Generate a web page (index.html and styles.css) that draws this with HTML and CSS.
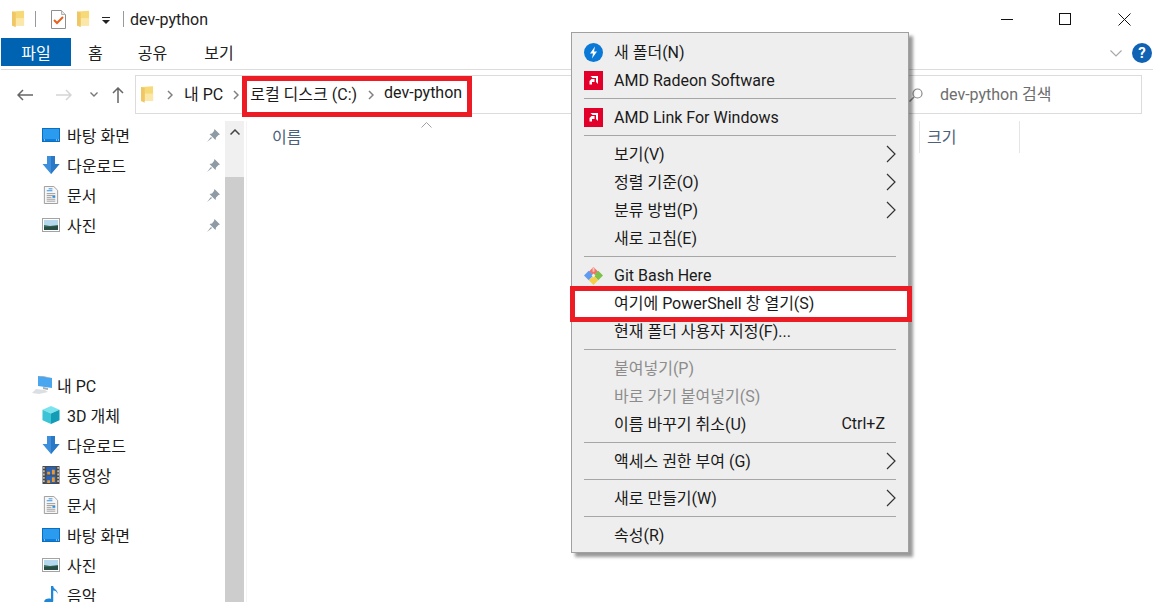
FILE: index.html
```html
<!DOCTYPE html>
<html lang="ko">
<head>
  <meta charset="UTF-8">
  <meta name="viewport" content="width=device-width, initial-scale=1.0">
  <title>dev-python</title>
  <link rel="stylesheet" href="styles.css">
</head>
<body>

  <svg class="sprite" xmlns="http://www.w3.org/2000/svg">
    <symbol id="i-folder" viewBox="0 0 14 18">
      <path d="M0 1l13-1v16H0z" fill="#f8d978"/>
      <path d="M4 8h9v8H4z" fill="#fbe7a8"/>
      <path d="M0 1l4 1v16l-4-2z" fill="#efc765"/>
    </symbol>
    <symbol id="i-check" viewBox="0 0 15 19">
      <path d="M.5.5h10l4 4v14H.5z" fill="#fff" stroke="#8f8f8f"/>
      <path d="M10.5.5v4h4" fill="#e6e6e6" stroke="#b0b0b0"/>
      <path d="M3 10l3 3 6-6" fill="none" stroke="#e8601c" stroke-width="2"/>
    </symbol>
    <symbol id="i-desktop" viewBox="0 0 18 14">
      <rect width="18" height="14" fill="#0b6fc0"/>
      <rect x="1" y="1" width="16" height="10" fill="#2b9bf0"/>
      <rect x="1" y="11" width="16" height="2" fill="#0f7ed8"/>
      <path d="M2 12h1M14 12h1M16 12h1" stroke="#e8f4ff"/>
    </symbol>
    <symbol id="i-down" viewBox="0 0 17 18">
      <path d="M4.500 0h8v8H17l-8.500 10L0 8h4.500z" fill="#3d8fdc"/>
      <path d="M8.500 0h4v8H17l-8.500 10z" fill="#2a78c6"/>
    </symbol>
    <symbol id="i-doc" viewBox="0 0 15 19">
      <path d="M.5.5h10l4 4v14H.5z" fill="#f6f6f6" stroke="#9a9a9a"/>
      <path d="M5 3h4M3 5h6" stroke="#2f8fe0"/>
      <path d="M3 8h9M3 10h9M3 12h5M3 14h9M3 16h9" stroke="#9c9c9c"/>
      <path d="M9 11.500h3" stroke="#2f8fe0" stroke-width="2"/>
    </symbol>
    <symbol id="i-picture" viewBox="0 0 18 14">
      <rect x=".5" y=".5" width="17" height="13" fill="#fff" stroke="#a3a3a3"/>
      <rect x="2" y="2" width="14" height="10" fill="#b5d8ee"/>
      <path d="M2 7l6 1 8-1v5H2z" fill="#3d6f5c"/>
      <path d="M2 9l14-1v4H2z" fill="#274d45"/>
    </symbol>
    <symbol id="i-pin" viewBox="0 0 13 13">
      <path d="M7.500 0L13 5.500l-1.500.5L9 8.500 8.500 11 2.500 5l2.500-.5L7 2z" fill="#8e9aa4"/>
      <path d="M4 8L0 13l5-4z" fill="#8e9aa4"/>
    </symbol>
    <symbol id="i-pc" viewBox="0 0 20 19">
      <path d="M6 0l14 2v10L6 10z" fill="#4aa6ee"/>
      <path d="M6 0l2-.5 12 2.500-14-2z" fill="#8a8f96"/>
      <path d="M11 11l5 1v2l-5-1z" fill="#a8adb2"/>
      <path d="M4 13l9 1 3 2-9 2-7-1z" fill="#dcdfe2"/>
    </symbol>
    <symbol id="i-cube" viewBox="0 0 18 19">
      <path d="M9 0l9 4-9 4-9-4z" fill="#7be3ee"/>
      <path d="M0 4l9 4v11l-9-4z" fill="#3cc4d6"/>
      <path d="M18 4L9 8v11l9-4z" fill="#139cb6"/>
    </symbol>
    <symbol id="i-film" viewBox="0 0 18 19">
      <rect width="18" height="19" fill="#4a4a4a"/>
      <path d="M1.500 1v17M16.500 1v17" stroke="#d8d8d8" stroke-width="1.500" stroke-dasharray="2 1.500"/>
      <rect x="4" y="1" width="10" height="8" fill="#2a62b8"/>
      <rect x="4" y="10" width="10" height="8" fill="#2a62b8"/>
      <path d="M5 6h3v3H5zM10 4h3v5h-3zM5 15h3v3H5zM10 12h3v5h-3z" fill="#e89a2a"/>
    </symbol>
    <symbol id="i-note" viewBox="0 0 12 16">
      <path d="M6 0h2c0 3 4 3 4 7-1-2-2-3-4-3v9c0 2-2 3-4 3s-4-1-4-2.500S2 11 4 11c1 0 1.500 0 2 .5z" fill="#1f86d8"/>
    </symbol>
    <symbol id="i-amd" viewBox="0 0 19 19">
      <rect width="19" height="19" fill="#e2002a"/>
      <path d="M6.500 5H14v8l-2-2V7H8.500z" fill="#fff"/>
      <path d="M5.500 13.500V10l2-2h3v3H8v2.500z" fill="#fff"/>
    </symbol>
    <symbol id="i-bolt" viewBox="0 0 19 19">
      <circle cx="9.500" cy="9.500" r="9.500" fill="#0a78d7"/>
      <path d="M11 3.500L6 10.500h3L8 15.500l5-7h-3z" fill="#fff"/>
    </symbol>
    <symbol id="i-git" viewBox="0 0 20 20">
      <path d="M10 1l5 5-5 4-5-4z" fill="#f0736a"/>
      <path d="M11 1.500h-2V6h2z" fill="#f9c5c0"/>
      <path d="M5 5l5 5-5 5-5-5z" fill="#5d9cf0"/>
      <path d="M15 5l5 5-5 5-5-5z" fill="#7ec04a"/>
      <path d="M10 10l5 5-5 5-5-5z" fill="#f6cf4a"/>
      <path d="M10 8l2 2-2 2-2-2z" fill="#eee"/>
    </symbol>
    <symbol id="i-chevron" viewBox="0 0 10 18">
      <path d="M1 1l8 8-8 8" fill="none" stroke="#333" stroke-width="1.200"/>
    </symbol>
    <symbol id="i-crumb" viewBox="0 0 6 10">
      <path d="M1 1l4 4-4 4" fill="none" stroke="#808080" stroke-width="1.500"/>
    </symbol>
  </svg>

  <div class="titlebar">
    <svg class="ic-folder"><use href="#i-folder"/></svg>
    <span class="tb-sep sep-a"></span>
    <svg class="ic-check"><use href="#i-check"/></svg>
    <svg class="ic-folder folder-b"><use href="#i-folder"/></svg>
    <svg class="qa-arrow" viewBox="0 0 8 7"><path d="M0 0h8v1H0zM0 3h8L4 7z" fill="#222"/></svg>
    <span class="tb-sep sep-b"></span>
    <span class="title">dev-python</span>
    <div class="win-btns">
      <svg class="win-btn" viewBox="0 0 13 13"><path d="M1 6.500h12" stroke="#111"/></svg>
      <svg class="win-btn" viewBox="0 0 13 13"><rect x=".5" y=".5" width="11" height="11" fill="none" stroke="#111"/></svg>
      <svg class="win-btn" viewBox="0 0 13 13"><path d="M.5.500l12 12M12.500.5l-12 12" stroke="#111"/></svg>
    </div>
  </div>

  <div class="ribbon">
    <span class="tab tab-file">파일</span>
    <span class="tab tab-home">홈</span>
    <span class="tab tab-share">공유</span>
    <span class="tab tab-view">보기</span>
    <svg class="ribbon-chevron" viewBox="0 0 12 7"><path d="M.5.500L6 6 11.500.5" fill="none" stroke="#a8a8a8" stroke-width="1.200"/></svg>
    <span class="help">?</span>
  </div>

  <div class="navrow">
    <svg class="nav nav-back" viewBox="0 0 16 12"><path d="M16 6H1M6 1L1 6l5 5" fill="none" stroke="#666" stroke-width="1.500"/></svg>
    <svg class="nav nav-fwd" viewBox="0 0 16 12"><path d="M0 6h15M10 1l5 5-5 5" fill="none" stroke="#d5d5d5" stroke-width="1.500"/></svg>
    <svg class="nav nav-drop" viewBox="0 0 8 5"><path d="M.5.500L4 4 7.500.5" fill="none" stroke="#777" stroke-width="1.400"/></svg>
    <svg class="nav nav-up" viewBox="0 0 12 16"><path d="M6 16V1M1 6l5-5 5 5" fill="none" stroke="#666" stroke-width="1.500"/></svg>
    <div class="address">
      <svg class="ic-folder"><use href="#i-folder"/></svg>
      <svg class="crumb-arrow arrow-first"><use href="#i-crumb"/></svg>
      <span class="crumb">내 PC</span>
      <svg class="crumb-arrow arrow-second"><use href="#i-crumb"/></svg>
      <div class="crumb-mark">
        <span class="crumb">로컬 디스크 (C:)</span>
        <svg class="crumb-arrow arrow-third"><use href="#i-crumb"/></svg>
        <span class="crumb">dev-python</span>
      </div>
    </div>
    <div class="search">
      <svg class="search-ic" viewBox="0 0 14 14"><circle cx="8.500" cy="5.500" r="4.500" fill="none" stroke="#8a8a8a" stroke-width="1.200"/><path d="M5 9l-4.500 4.500" stroke="#8a8a8a" stroke-width="1.500"/></svg>
      <span>dev-python 검색</span>
    </div>
  </div>

  <div class="main">
    <div class="sidebar">
      <div class="nav-item"><svg class="ic-wide"><use href="#i-desktop"/></svg><span>바탕 화면</span><svg class="ic-pin"><use href="#i-pin"/></svg></div>
      <div class="nav-item"><svg class="ic-wide ic-tall"><use href="#i-down"/></svg><span>다운로드</span><svg class="ic-pin"><use href="#i-pin"/></svg></div>
      <div class="nav-item"><svg class="ic-wide ic-tall"><use href="#i-doc"/></svg><span>문서</span><svg class="ic-pin"><use href="#i-pin"/></svg></div>
      <div class="nav-item"><svg class="ic-wide"><use href="#i-picture"/></svg><span>사진</span><svg class="ic-pin"><use href="#i-pin"/></svg></div>

      <div class="nav-item nav-pc"><svg class="ic-pc"><use href="#i-pc"/></svg><span>내 PC</span></div>
      <div class="nav-item"><svg class="ic-wide ic-tall"><use href="#i-cube"/></svg><span>3D 개체</span></div>
      <div class="nav-item"><svg class="ic-wide ic-tall"><use href="#i-down"/></svg><span>다운로드</span></div>
      <div class="nav-item"><svg class="ic-wide ic-tall"><use href="#i-film"/></svg><span>동영상</span></div>
      <div class="nav-item"><svg class="ic-wide ic-tall"><use href="#i-doc"/></svg><span>문서</span></div>
      <div class="nav-item"><svg class="ic-wide"><use href="#i-desktop"/></svg><span>바탕 화면</span></div>
      <div class="nav-item"><svg class="ic-wide"><use href="#i-picture"/></svg><span>사진</span></div>
      <div class="nav-item"><svg class="ic-wide ic-tall"><use href="#i-note"/></svg><span>음악</span></div>
    </div>

    <div class="scrollbar">
      <div class="scroll-track">
        <svg class="scroll-up" viewBox="0 0 10 6"><path d="M.5 5.500L5 1l4.500 4.500" fill="none" stroke="#444" stroke-width="1.500"/></svg>
      </div>
      <div class="scroll-thumb"></div>
    </div>

    <div class="files">
      <div class="col col-name">
        <span>이름</span>
        <svg class="sort-caret" viewBox="0 0 11 6"><path d="M.5 5.500L5.500.5l5 5" fill="none" stroke="#a0a0a0"/></svg>
      </div>
      <div class="col col-size"><span>크기</span></div>
    </div>
  </div>

  <div class="menu">
    <div class="row"><svg class="row-ic"><use href="#i-bolt"/></svg><span>새 폴더(N)</span></div>
    <div class="row row-latin"><svg class="row-ic"><use href="#i-amd"/></svg><span>AMD Radeon Software</span></div>
    <div class="menu-sep"></div>
    <div class="row row-latin"><svg class="row-ic"><use href="#i-amd"/></svg><span>AMD Link For Windows</span></div>
    <div class="menu-sep"></div>
    <div class="row"><span class="row-ic"></span><span>보기(V)</span><svg class="row-more"><use href="#i-chevron"/></svg></div>
    <div class="row"><span class="row-ic"></span><span>정렬 기준(O)</span><svg class="row-more"><use href="#i-chevron"/></svg></div>
    <div class="row"><span class="row-ic"></span><span>분류 방법(P)</span><svg class="row-more"><use href="#i-chevron"/></svg></div>
    <div class="row"><span class="row-ic"></span><span>새로 고침(E)</span></div>
    <div class="menu-sep"></div>
    <div class="row row-latin"><svg class="row-ic"><use href="#i-git"/></svg><span>Git Bash Here</span></div>
    <div class="row row-mark"><span class="row-ic"></span><span>여기에 PowerShell 창 열기(S)</span></div>
    <div class="row"><span class="row-ic"></span><span>현재 폴더 사용자 지정(F)...</span></div>
    <div class="menu-sep"></div>
    <div class="row row-off"><span class="row-ic"></span><span>붙여넣기(P)</span></div>
    <div class="row row-off"><span class="row-ic"></span><span>바로 가기 붙여넣기(S)</span></div>
    <div class="row"><span class="row-ic"></span><span>이름 바꾸기 취소(U)</span><span class="row-key">Ctrl+Z</span></div>
    <div class="menu-sep"></div>
    <div class="row"><span class="row-ic"></span><span>액세스 권한 부여 (G)</span><svg class="row-more"><use href="#i-chevron"/></svg></div>
    <div class="menu-sep"></div>
    <div class="row"><span class="row-ic"></span><span>새로 만들기(W)</span><svg class="row-more"><use href="#i-chevron"/></svg></div>
    <div class="menu-sep"></div>
    <div class="row"><span class="row-ic"></span><span>속성(R)</span></div>
  </div>

</body>
</html>
```

FILE: styles.css
```css
html, body {
  height: 100%;
}

body {
  margin: 0;
  height: 602px;
  overflow: hidden;
  position: relative;
  background: #fff;
  color: #1a1a1a;
  font-family: Roboto, "Noto Sans CJK KR", sans-serif;
  font-size: 16px;
}

svg {
  display: block;
  flex: none;
}

.sprite {
  width: 0;
  height: 0;
  position: absolute;
}

/* title bar */
.titlebar {
  height: 38px;
  display: flex;
  align-items: center;
  padding-left: 12px;
}

.ic-folder {
  width: 13px;
  height: 18px;
}

.ic-check {
  width: 15px;
  height: 19px;
  margin-left: 15px;
}

.folder-b {
  margin-left: 11px;
}

.tb-sep {
  width: 1px;
  height: 16px;
  background: #9a9a9a;
}

.sep-a {
  margin-left: 10px;
}

.sep-b {
  margin-left: 13px;
}

.qa-arrow {
  width: 8px;
  height: 7px;
  margin-left: 12px;
  margin-top: 3px;
}

.title {
  margin-left: 6px;
  color: #222;
}

.win-btns {
  margin-left: auto;
  display: flex;
  gap: 46px;
  padding-right: 22px;
}

.win-btn {
  width: 13px;
  height: 13px;
}

/* ribbon tabs */
.ribbon {
  height: 31px;
  margin-left: 1px;
  display: flex;
  align-items: flex-start;
  border-bottom: 1px solid #dcdcdc;
}

.tab {
  height: 28px;
  line-height: 31px;
  color: #222;
}

.tab-file {
  width: 70px;
  text-align: center;
  background: #0063b1;
  color: #fff;
}

.tab-home {
  margin-left: 17px;
}

.tab-share {
  margin-left: 35px;
}

.tab-view {
  margin-left: 37px;
}

.ribbon-chevron {
  width: 12px;
  height: 7px;
  margin-left: auto;
  margin-top: 12px;
}

.help {
  width: 20px;
  height: 20px;
  margin: 5px 1px 0 10px;
  border-radius: 50%;
  background: #0f62b4;
  color: #fff;
  font-weight: 700;
  font-size: 15px;
  line-height: 20px;
  text-align: center;
}

/* address row */
.navrow {
  height: 39px;
  margin-top: 5px;
  padding-right: 11px;
  display: flex;
  align-items: center;
}

.nav-back {
  width: 16px;
  height: 12px;
  margin-left: 17px;
}

.nav-fwd {
  width: 16px;
  height: 12px;
  margin-left: 23px;
}

.nav-drop {
  width: 8px;
  height: 5px;
  margin-left: 18px;
}

.nav-up {
  width: 12px;
  height: 16px;
  margin-left: 14px;
}

.address {
  flex: 1;
  margin-left: 11px;
  height: 37px;
  box-sizing: content-box;
  border: 1px solid #dcdcdc;
  display: flex;
  align-items: center;
  padding-left: 5px;
}

.address .ic-folder {
  height: 17px;
}

.crumb {
  color: #1a1a1a;
  white-space: nowrap;
  position: relative;
  top: -2px;
}

.crumb-arrow {
  width: 6px;
  height: 10px;
}

.arrow-first {
  margin: 0 11px 0 13px;
}

.arrow-second {
  margin: 0 11px 0 10px;
}

.arrow-third {
  margin: 0 10px 0 11px;
}

.crumb-mark {
  position: relative;
  display: flex;
  align-items: center;
}

.crumb-mark::after {
  content: "";
  position: absolute;
  left: -8px;
  right: -10px;
  top: -7px;
  bottom: -10px;
  border: 5px solid #ed1c24;
}

.search {
  width: 235px;
  height: 37px;
  border: 1px solid #dcdcdc;
  border-left: 0;
  display: flex;
  align-items: center;
  color: #6d6d6d;
}

.search span {
  position: relative;
  top: -2px;
}

.search-ic {
  width: 14px;
  height: 14px;
  margin: 0 17px 0 3px;
}

/* left tree and list */
.main {
  height: 488px;
  display: flex;
}

.sidebar {
  width: 225px;
  padding-top: 6px;
}

.nav-item {
  height: 30px;
  display: flex;
  align-items: center;
  padding-left: 42px;
}

.nav-item span {
  margin-left: 7px;
}

.ic-wide {
  width: 18px;
  height: 14px;
}

.ic-tall {
  height: 18px;
}

.ic-pin {
  width: 13px;
  height: 13px;
  margin-left: auto;
  margin-right: 5px;
}

.ic-pc {
  width: 20px;
  height: 19px;
}

.nav-pc {
  margin-top: 130px;
  padding-left: 32px;
}

.nav-pc span {
  margin-left: 5px;
}

.scrollbar {
  width: 19px;
  margin-top: 7px;
  display: flex;
  flex-direction: column;
}

.scroll-track {
  height: 56px;
  background: #f0f0f0;
  display: flex;
  justify-content: center;
  padding-top: 8px;
  box-sizing: border-box;
}

.scroll-up {
  width: 10px;
  height: 6px;
}

.scroll-thumb {
  flex: 1;
  background: #cdcdcd;
}

.files {
  flex: 1;
  margin-top: 7px;
  margin-left: 2px;
  border-left: 1px solid #f4f4f4;
  display: flex;
  align-items: flex-start;
}

.col {
  height: 32px;
  padding-bottom: 3px;
  display: flex;
  align-items: center;
  border-right: 1px solid #e5e5e5;
  color: #4c607a;
  box-sizing: border-box;
}

.col-name {
  width: 673px;
  padding-left: 25px;
}

.col-size {
  width: 100px;
  padding-left: 7px;
}

.sort-caret {
  width: 11px;
  height: 6px;
  margin-left: 120px;
  margin-top: 1px;
  align-self: flex-start;
}

/* context menu */
.menu {
  position: absolute;
  left: 571px;
  top: 32px;
  width: 338px;
  box-sizing: border-box;
  padding: 5px 12px 3px;
  background: #eeeeee;
  border: 1px solid #a0a0a0;
  box-shadow: 4px 4px 3px rgba(0, 0, 0, 0.4);
}

.row {
  height: 28px;
  display: flex;
  align-items: center;
  position: relative;
  white-space: nowrap;
}

.row > span:not(.row-ic) {
  position: relative;
  top: -1px;
}

.row-latin > span:not(.row-ic) {
  top: 0;
}

.row-ic {
  width: 19px;
  height: 19px;
  margin-right: 11px;
  flex: none;
}

.row-more {
  width: 10px;
  height: 18px;
  margin-left: auto;
}

.row-key {
  margin-left: auto;
  margin-right: 11px;
}

.row-off {
  color: #8c8c8c;
}

.row-mark::before {
  content: "";
  position: absolute;
  left: -12px;
  right: -12px;
  top: 0;
  bottom: 0;
  background: #fff;
}

.row-mark::after {
  content: "";
  position: absolute;
  left: -14px;
  right: -16px;
  top: -3px;
  bottom: -5px;
  border: 5px solid #ed1c24;
}

.menu-sep {
  height: 1px;
  margin: 4px 0;
  background: #a6a6a6;
}
```
